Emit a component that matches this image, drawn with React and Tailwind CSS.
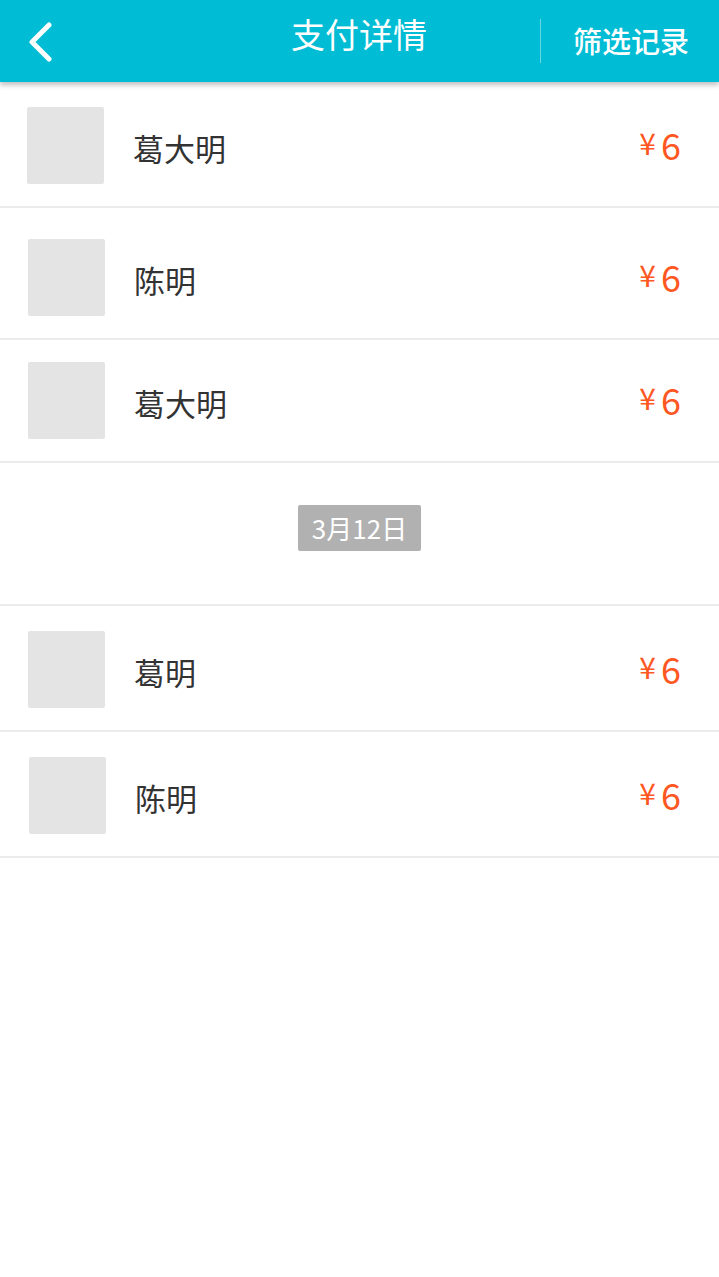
const rows = [
  { name: '葛大明', pt: 'pt-[25px]', pad: 'pl-[27px]' },
  { name: '陈明', pt: 'pt-[31px]', pad: 'pl-[28px]' },
  { name: '葛大明', pt: 'pt-[22px]', pad: 'pl-[28px]' },
];

const rows2 = [
  { name: '葛明', pt: 'pt-[25px]', pad: 'pl-[28px]' },
  { name: '陈明', pt: 'pt-[25px]', pad: 'pl-[29px]' },
];

function PayRow({ item }) {
  return (
    <div className={`flex items-center ${item.pt} pb-[22px] ${item.pad} pr-[38px] border-b-2 border-[#ebebeb]`}>
      <div className="w-[77px] h-[77px] bg-[#e4e4e4] rounded-[2px] shrink-0" />
      <span className="ml-[29px] mt-[4px] text-[31px] text-[#333333] leading-none">{item.name}</span>
      <span className="ml-auto flex items-center text-[#ff5722] mb-[4px]">
        <span className="text-[30px] leading-none mr-[5px] -mt-[4px]">¥</span>
        <span className="text-[36px] leading-none">6</span>
      </span>
    </div>
  );
}

export default function App() {
  return (
    <div className="w-[719px] min-h-[1277px] bg-white font-['Noto_Sans_CJK_SC','Noto_Sans',sans-serif]">
      <header className="relative z-10 h-[82px] bg-[#00bcd4] flex items-center shadow-[0_3px_5px_rgba(0,0,0,0.25)]">
        <div className="w-[110px] pl-[26px] pt-[2px]">
          <svg width="28" height="40" viewBox="0 0 28 40" fill="none">
            <path d="M23 3 L6 20 L23 37" stroke="white" strokeWidth="5" strokeLinecap="round" strokeLinejoin="round" />
          </svg>
        </div>
        <h1 className="flex-1 text-center text-white text-[34px] leading-none pl-[68px] pb-[14px]">支付详情</h1>
        <div className="w-[1px] h-[44px] bg-white/40" />
        <button className="w-[178px] text-white text-[29px] font-medium leading-none text-center pl-[2px] pb-[2px]">筛选记录</button>
      </header>
      <div>
        {rows.map((r, i) => (
          <PayRow key={i} item={r} />
        ))}
        <div className="h-[143px] flex items-center justify-center border-b-2 border-[#ebebeb] pb-[12px]">
          <span className="bg-[#b1b1b1] text-white text-[26px] leading-none px-[14px] py-[10px] rounded-[2px]">3月12日</span>
        </div>
        {rows2.map((r, i) => (
          <PayRow key={i} item={r} />
        ))}
      </div>
    </div>
  );
}
